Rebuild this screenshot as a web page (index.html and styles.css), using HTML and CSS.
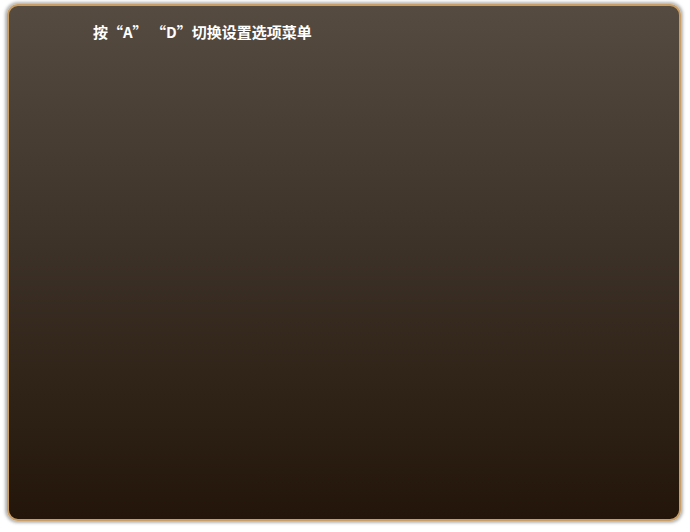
FILE: index.html
```html
<!DOCTYPE html>
<html lang="zh">
<head>
<meta charset="utf-8">
<link rel="stylesheet" href="styles.css">
</head>
<body>
<div class="panel">
  <div class="hint">按“A” “D”切换设置选项菜单</div>
</div>
</body>
</html>
```
FILE: styles.css
```css
html, body {
  margin: 0;
  padding: 0;
  background: #ffffff;
  width: 690px;
  height: 532px;
  overflow: hidden;
}
body {
  padding: 4px 9px 11px 7px;
  box-sizing: border-box;
}
.panel {
  height: 100%;
  box-sizing: border-box;
  border: 2px solid #c99e66;
  border-radius: 11px;
  background: linear-gradient(to bottom, #554b41 0%, #3e3329 45%, #231509 100%);
  box-shadow: 0 0 3px 2px rgba(120,120,120,0.55);
  padding: 16px 0 0 84px;
}
.hint {
  font-family: "Noto Sans CJK SC", "Noto Sans", sans-serif;
  font-weight: bold;
  font-size: 15px;
  line-height: 20px;
  color: #ffffff;
}
```
